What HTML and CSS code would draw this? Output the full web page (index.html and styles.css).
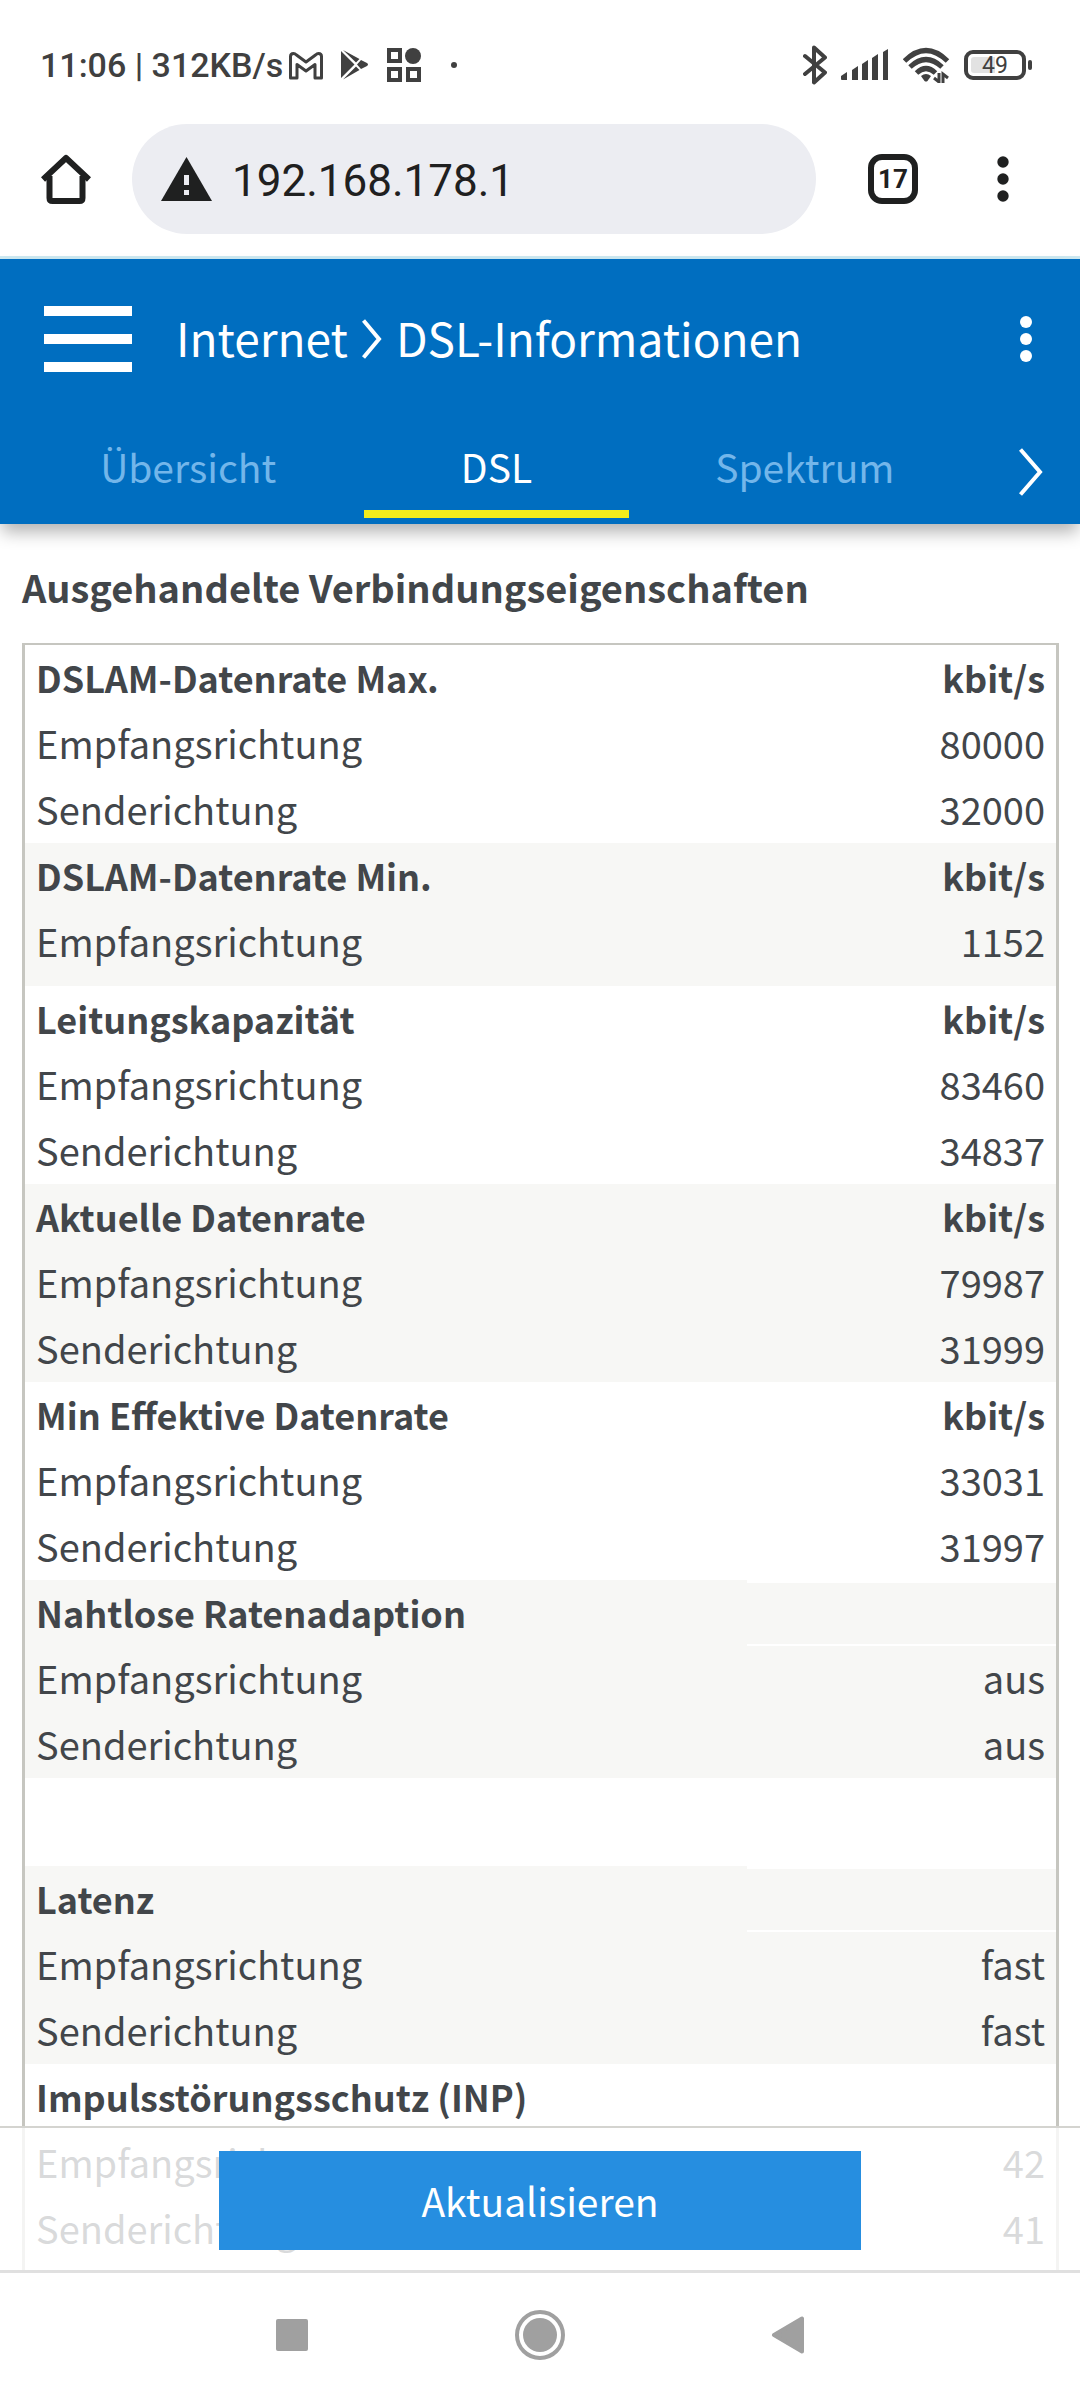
FILE: index.html
```html
<!doctype html>
<html lang="de">
  <head>
    <meta charset="UTF-8" />
    <meta name="viewport" content="width=device-width, initial-scale=1.0" />
    <title>DSL-Informationen</title>
    <link rel="stylesheet" href="styles.css">
  </head>
  <body>
    <div class="statusbar">
      <span class="clock">11:06 | 312KB/s</span>
      <div class="notifications">
        <svg width="34" height="34" viewBox="0 0 34 34" fill="none" stroke="#404040" stroke-width="3" stroke-linejoin="round">
          <path d="M1.500 8.500q0-3 3-3 1.500 0 3 1.500L17 14l9.500-7q1.500-1.500 3-1.500 3 0 3 3V30H26V16.500L17 23l-9-6.500V30H1.500z" />
        </svg>
        <svg width="28" height="34" viewBox="0 0 28 34" fill="#404040">
          <path d="M0 3v27l13.500-13.500zM2 2l13 12.500 3.500-3.500zM2 31.500l13-13 3.500 3.500zM20 12l-4 4.500 4 4.500 6-3q2-1.500 0-3z" />
        </svg>
        <svg width="34" height="36" viewBox="0 0 34 36">
          <g fill="none" stroke="#404040" stroke-width="4">
            <rect x="2" y="3" width="11" height="11" />
            <rect x="2" y="22" width="11" height="11" />
            <rect x="21" y="22" width="11" height="11" />
          </g>
          <circle cx="26" cy="9" r="8" fill="#404040" />
        </svg>
        <span class="more-dot"></span>
      </div>
      <div class="system-icons">
        <svg width="24" height="40" viewBox="0 0 24 40" fill="none" stroke="#404040" stroke-width="4" stroke-linecap="round" stroke-linejoin="round">
          <path d="M2 11l20 16.500-11 10V2.500l11 10L2 29" />
        </svg>
        <svg width="48" height="32" viewBox="0 0 48 32" fill="#404040">
          <path d="M0 27l6-4v8H1q-1 0-1-1zM11 21l6-4v14h-6zM21 15l6-4v20h-6zM31 9l6-4v26h-6zM42 3l5-3v31h-5z" />
        </svg>
        <svg width="47" height="36" viewBox="0 0 47 36" fill="none" stroke="#404040" stroke-width="5">
          <path d="M1.500 14Q23 -7 44.500 14M7 20Q23 5 39 20M13.500 26Q23 17 32.500 26" />
          <path d="M18 29q5-4 10 0l-3.500 5q-1.500 1-3 0z" fill="#404040" stroke="none" />
          <path d="M36 26v9l-5-4M40 36v-9l5 4" stroke-width="3" />
        </svg>
        <span class="battery"><span class="battery-level">49</span></span>
      </div>
    </div>

    <div class="browserbar">
      <button class="icon-btn" aria-label="Startseite">
        <svg width="50" height="50" viewBox="0 0 50 50" fill="none" stroke="#1f2020" stroke-width="6" stroke-linejoin="round">
          <path d="M8.500 22v22q0 3 3 3h27q3 0 3-3V22" />
          <path d="M2 25.500L25 4l23 21.500" />
        </svg>
      </button>
      <label class="address">
        <svg width="51" height="44" viewBox="0 0 51 44">
          <path d="M25.500 0L51 44H0z" fill="#1f2020" />
          <path d="M23 18h5v10h-5zM23 33h5v5h-5z" fill="#ecedf2" />
        </svg>
        <input type="text" value="192.168.178.1" aria-label="Adresse" />
      </label>
      <button class="tab-count" aria-label="Tabs">17</button>
      <button class="icon-btn" aria-label="Browsermenü">
        <svg width="12" height="46" viewBox="0 0 12 46" fill="#1f2020">
          <circle cx="6" cy="6" r="5.700" />
          <circle cx="6" cy="23" r="5.700" />
          <circle cx="6" cy="40" r="5.700" />
        </svg>
      </button>
    </div>

    <header class="header">
      <div class="header-top">
        <button class="menu-btn" aria-label="Menü">
          <span></span>
          <span></span>
          <span></span>
        </button>
        <h1 class="breadcrumb">
          <a href="#">Internet</a>
          <svg width="20" height="40" viewBox="0 0 20 40" fill="none" stroke="#fff" stroke-width="4">
            <path d="M1.500 1.500L17 20 1.500 38.500" />
          </svg>
          <span>DSL-Informationen</span>
        </h1>
        <button class="icon-btn" aria-label="Optionen">
          <svg width="12" height="46" viewBox="0 0 12 46" fill="#fff">
            <circle cx="6" cy="6" r="6" />
            <circle cx="6" cy="23" r="6" />
            <circle cx="6" cy="40" r="6" />
          </svg>
        </button>
      </div>
      <nav class="tabs">
        <a class="tab" href="#">Übersicht</a>
        <a class="tab active" href="#">DSL</a>
        <a class="tab" href="#">Spektrum</a>
        <button class="next-btn" aria-label="Weiter">
          <svg width="24" height="48" viewBox="0 0 24 48" fill="none" stroke="#fff" stroke-width="4">
            <path d="M1.500 1.500L21 24 1.500 46.500" />
          </svg>
        </button>
      </nav>
    </header>

    <div class="page">
      <main class="content">
        <h2>Ausgehandelte Verbindungseigenschaften</h2>
        <table class="values">
          <tbody>
            <tr><th>DSLAM-Datenrate Max.</th><th>kbit/s</th></tr>
            <tr><td>Empfangsrichtung</td><td>80000</td></tr>
            <tr><td>Senderichtung</td><td>32000</td></tr>
          </tbody>
          <tbody class="alt short">
            <tr><th>DSLAM-Datenrate Min.</th><th>kbit/s</th></tr>
            <tr><td>Empfangsrichtung</td><td>1152</td></tr>
          </tbody>
          <tbody>
            <tr><th>Leitungskapazität</th><th>kbit/s</th></tr>
            <tr><td>Empfangsrichtung</td><td>83460</td></tr>
            <tr><td>Senderichtung</td><td>34837</td></tr>
          </tbody>
          <tbody class="alt">
            <tr><th>Aktuelle Datenrate</th><th>kbit/s</th></tr>
            <tr><td>Empfangsrichtung</td><td>79987</td></tr>
            <tr><td>Senderichtung</td><td>31999</td></tr>
          </tbody>
          <tbody>
            <tr><th>Min Effektive Datenrate</th><th>kbit/s</th></tr>
            <tr><td>Empfangsrichtung</td><td>33031</td></tr>
            <tr><td>Senderichtung</td><td>31997</td></tr>
          </tbody>
          <tbody class="alt">
            <tr><th>Nahtlose Ratenadaption</th><td class="empty"></td></tr>
            <tr><td>Empfangsrichtung</td><td>aus</td></tr>
            <tr><td>Senderichtung</td><td>aus</td></tr>
          </tbody>
          <tbody>
            <tr class="spacer"><td colspan="2"></td></tr>
          </tbody>
          <tbody class="alt">
            <tr><th>Latenz</th><td class="empty"></td></tr>
            <tr><td>Empfangsrichtung</td><td>fast</td></tr>
            <tr><td>Senderichtung</td><td>fast</td></tr>
          </tbody>
          <tbody>
            <tr><th>Impulsstörungsschutz (INP)</th><td></td></tr>
            <tr><td>Empfangsrichtung</td><td>42</td></tr>
            <tr><td>Senderichtung</td><td>41</td></tr>
          </tbody>
          <tbody>
            <tr class="divider"><td colspan="2"><hr /></td></tr>
          </tbody>
        </table>
      </main>
      <div class="actions">
        <button class="refresh-btn">Aktualisieren</button>
      </div>
    </div>

    <div class="navbar">
      <button aria-label="Übersicht der Apps">
        <svg width="32" height="32" viewBox="0 0 32 32" fill="#a0a0a0">
          <rect width="32" height="32" rx="2" />
        </svg>
      </button>
      <button aria-label="Home">
        <svg width="50" height="50" viewBox="0 0 50 50">
          <circle cx="25" cy="25" r="23" fill="none" stroke="#a0a0a0" stroke-width="4" />
          <circle cx="25" cy="25" r="17" fill="#a0a0a0" />
        </svg>
      </button>
      <button aria-label="Zurück">
        <svg width="34" height="38" viewBox="0 0 34 38" fill="#a0a0a0" stroke="#a0a0a0" stroke-width="4" stroke-linejoin="round">
          <path d="M3 19L31 2.500v33z" />
        </svg>
      </button>
    </div>
  </body>
</html>
```

FILE: styles.css
```css
* {
  margin: 0;
  padding: 0;
  box-sizing: border-box;
}

body {
  font-family: "Noto Sans CJK SC", "Open Sans", sans-serif;
  font-size: 38px;
  line-height: 64px;
  color: #42464a;
  background: #ffffff;
  height: 100vh;
  display: flex;
  flex-direction: column;
}

button {
  font: inherit;
  color: inherit;
  background: none;
  border: none;
  cursor: pointer;
}

a {
  color: inherit;
  text-decoration: none;
}

svg {
  display: block;
  flex: none;
}

/* Android status bar */
.statusbar {
  display: flex;
  align-items: center;
  padding: 30px 54px 0 40px;
  height: 100px;
  font-family: Roboto, sans-serif;
  font-size: 34px;
  color: #404040;
}

.clock {
  font-weight: 500;
}

.notifications {
  display: flex;
  align-items: center;
  gap: 18px;
  margin-left: 6px;
}

.more-dot {
  width: 6px;
  height: 6px;
  margin-left: 12px;
  border-radius: 50%;
  background: #404040;
}

.system-icons {
  display: flex;
  align-items: center;
  gap: 14px;
  margin-left: auto;
}

.battery {
  position: relative;
  width: 62px;
  height: 30px;
  padding: 3px;
  border: 4px solid #404040;
  border-radius: 9px;
}

.battery::after {
  content: "";
  position: absolute;
  right: -10px;
  top: 6px;
  width: 4px;
  height: 10px;
  border-radius: 2px;
  background: #404040;
}

.battery-level {
  display: block;
  height: 16px;
  font-size: 23px;
  line-height: 18px;
  text-align: center;
  border-radius: 3px;
  background: linear-gradient(90deg, #e2e2e2 50%, transparent 50%);
}

/* Browser toolbar */
.browserbar {
  display: flex;
  align-items: center;
  padding: 24px 71px 22px 41px;
  border-bottom: 3px solid #cde9f2;
  font-family: Roboto, sans-serif;
  color: #1f2020;
}

.address {
  flex: 1;
  display: flex;
  align-items: center;
  gap: 20px;
  min-width: 0;
  height: 110px;
  margin: 0 52px 0 41px;
  padding: 0 29px;
  border-radius: 55px;
  background: #ecedf2;
}

.address input {
  flex: 1;
  min-width: 0;
  padding-top: 4px;
  border: none;
  outline: none;
  background: none;
  font: inherit;
  font-size: 44px;
  color: inherit;
}

.tab-count {
  width: 50px;
  height: 50px;
  margin-right: 79px;
  border: 6px solid #1f2020;
  border-radius: 14px;
  font-size: 26px;
  font-weight: 700;
  line-height: 38px;
}

/* Router header */
.header {
  position: relative;
  z-index: 1;
  background: #006ec0;
  color: #ffffff;
  box-shadow: 0 10px 16px -2px rgba(0, 0, 0, 0.3);
}

.header-top {
  display: flex;
  align-items: center;
  padding: 46px 48px;
}

.menu-btn {
  display: flex;
  flex-direction: column;
  gap: 18px;
  width: 88px;
  margin: 1px 0 0 -4px;
}

.menu-btn span {
  height: 10px;
  background: #ffffff;
}

.breadcrumb {
  flex: 1;
  display: flex;
  align-items: center;
  gap: 14px;
  margin-left: 44px;
  font-size: 46px;
  font-weight: 400;
  line-height: 60px;
}

.breadcrumb a,
.breadcrumb span {
  padding-bottom: 4px;
}

.tabs {
  position: relative;
  display: grid;
  grid-template-columns: repeat(3, 1fr);
  gap: 44px;
  padding: 16px 143px 6px 56px;
}

.tab {
  padding-bottom: 12px;
  border-bottom: 8px solid transparent;
  color: #73b6ea;
  font-size: 39px;
  text-align: center;
}

.tab.active {
  color: #ffffff;
  border-color: #f4ec1c;
}

.next-btn {
  position: absolute;
  right: 37px;
  top: 30px;
}

/* Content */
.page {
  position: relative;
  flex: 1;
  min-height: 0;
  overflow: hidden;
}

.content {
  padding: 31px 21px 0 22px;
}

h2 {
  margin-bottom: 24px;
  font-size: 38px;
  font-weight: 600;
}

.values {
  width: 100%;
  table-layout: fixed;
  border-collapse: separate;
  border-spacing: 0;
  border: 3px solid #c6c6c0;
  border-top-width: 2px;
}

.values th,
.values td {
  height: 66px;
  padding: 0 11px;
  text-align: right;
  vertical-align: top;
}

.values th:first-child,
.values td:first-child {
  width: 70%;
  text-align: left;
}

.values th {
  font-size: 36px;
  font-weight: 600;
}

.alt {
  background: #f7f7f5;
}

.short tr:last-child td {
  height: 77px;
}

.values .empty {
  border-top: 3px solid #ffffff;
  border-bottom: 2px solid #ffffff;
}

.values .spacer td {
  height: 88px;
}

.values .divider td {
  padding-top: 8px;
}

hr {
  border: none;
  border-top: 1px solid #42464a;
}

.actions {
  position: absolute;
  left: 0;
  right: 0;
  bottom: 0;
  padding: 23px 20px 20px;
  border-top: 2px solid #d4d4d0;
  background: rgba(255, 255, 255, 0.8);
}

.refresh-btn {
  display: block;
  width: 100%;
  max-width: 642px;
  height: 99px;
  margin: 0 auto;
  padding-bottom: 2px;
  background: #268ee0;
  color: #ffffff;
  font-size: 39px;
}

/* Android navigation */
.navbar {
  display: flex;
  justify-content: center;
  height: 130px;
  padding-bottom: 3px;
  border-top: 3px solid #e0e0e0;
}

.navbar button {
  display: flex;
  align-items: center;
  justify-content: center;
  width: 248px;
}
```
